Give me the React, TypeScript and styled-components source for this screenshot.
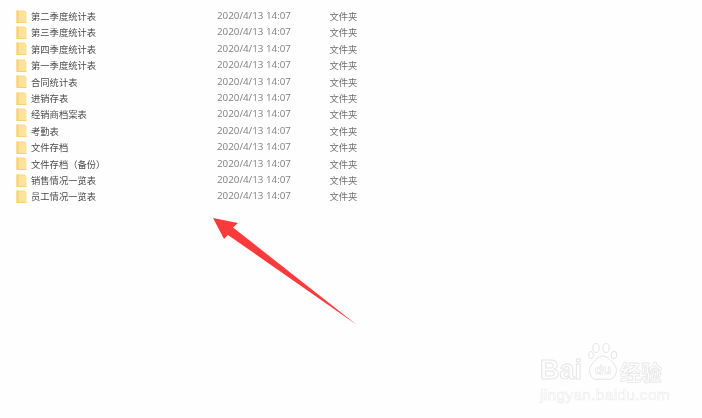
import styled, { createGlobalStyle } from 'styled-components';

const GlobalStyle = createGlobalStyle`
  html, body {
    margin: 0;
    padding: 0;
    background: #fefefe;
  }
`;

const Page = styled.div`
  position: relative;
  width: 702px;
  height: 418px;
  overflow: hidden;
  background: #fefefe;
  font-family: "Noto Sans CJK SC", "Liberation Sans", sans-serif;
`;

const FileList = styled.ul`
  list-style: none;
  margin: 0;
  padding: 8px 0 0 16px;
  filter: blur(0.45px);
`;

const Row = styled.li`
  display: grid;
  grid-template-columns: 15px 186px 113px auto;
  align-items: center;
  height: 16.4px;
  font-size: 9.3px;
  line-height: 16.4px;
  white-space: nowrap;
`;

const FolderIcon = styled.svg`
  display: block;
  width: 11px;
  height: 13px;
`;

const Name = styled.span`
  color: #4a4a4a;
`;

const Modified = styled.span`
  color: #808080;
  font-family: "Open Sans", "Noto Sans", sans-serif;
  font-size: 9.8px;
`;

const Kind = styled.span`
  color: #6e6e6e;
  margin-left: -0.5px;
`;

const Arrow = styled.svg`
  position: absolute;
  left: 0;
  top: 0;
  width: 702px;
  height: 418px;
`;

const Watermark = styled.div`
  position: absolute;
  left: 540px;
  top: 343px;
  width: 130px;
  height: 60px;
  filter: blur(0.3px);
`;

const Brand = styled.div`
  display: flex;
  align-items: flex-end;
  height: 42px;
`;

const BrandLatin = styled.span`
  font-family: "Liberation Sans", sans-serif;
  font-size: 27px;
  line-height: 30px;
  font-weight: 700;
  color: #fefefe;
  -webkit-text-stroke: 1px #e6e6e6;
`;

const BrandCjk = styled.span`
  margin-left: 38px;
  margin-bottom: 2px;
  font-size: 21px;
  line-height: 24px;
  font-weight: 700;
  color: #fefefe;
  -webkit-text-stroke: 0.8px #e6e6e6;
`;

const Paw = styled.svg`
  position: absolute;
  left: 48px;
  top: 0;
  width: 31px;
  height: 38px;
`;

const PawLabel = styled.text`
  font-family: "Liberation Sans", sans-serif;
  font-size: 13px;
  font-weight: 700;
  fill: #fefefe;
  stroke: #e4e4e4;
  stroke-width: 0.6px;
`;

const Domain = styled.div`
  margin-top: 1px;
  font-family: "Liberation Sans", sans-serif;
  font-size: 15.5px;
  line-height: 18px;
  letter-spacing: 0.3px;
  color: #fefefe;
  -webkit-text-stroke: 0.6px #ececec;
  white-space: nowrap;
`;

const names = [
  '第二季度统计表',
  '第三季度统计表',
  '第四季度统计表',
  '第一季度统计表',
  '合同统计表',
  '进销存表',
  '经销商档案表',
  '考勤表',
  '文件存档',
  '文件存档（备份）',
  '销售情况一览表',
  '员工情况一览表',
];

function Folder() {
  return (
    <FolderIcon viewBox="0 0 11 13">
      <path d="M0.5 0.5H9V12.5H0.5Z" fill="#f8d97f" />
      <path d="M2.5 1.5H10.5V12.5H2.5Z" fill="#fce39d" />
      <path d="M0.5 12H10.5V12.8H0.5Z" fill="#f0cb6c" />
      <path d="M0.5 0.5H2.5V12.5H0.5Z" fill="#f6d374" />
    </FolderIcon>
  );
}

export default function App() {
  return (
    <Page>
      <GlobalStyle />
      <FileList>
        {names.map((name) => (
          <Row key={name}>
            <Folder />
            <Name>{name}</Name>
            <Modified>2020/4/13 14:07</Modified>
            <Kind>文件夹</Kind>
          </Row>
        ))}
      </FileList>

      <Arrow viewBox="0 0 702 418">
        <path
          d="M213 218L238 223L233 227.5L357 325L228 235L224 239Z"
          fill="#fb3b3b"
        />
      </Arrow>

      <Watermark>
        <Brand>
          <BrandLatin>Bai</BrandLatin>
          <BrandCjk>经验</BrandCjk>
        </Brand>
        <Paw viewBox="0 0 31 38" fill="#fefefe" stroke="#e4e4e4" strokeWidth="1">
          <ellipse cx="3" cy="12" rx="2.4" ry="3.6" />
          <ellipse cx="8" cy="5" rx="3.2" ry="4.4" />
          <ellipse cx="18" cy="5" rx="3.2" ry="4.4" />
          <ellipse cx="26" cy="12" rx="2.8" ry="3.8" />
          <path d="M15 13C20 13 23 18 26 21C31 26 28 37 20 36.5C17 36 12 36 9 36.5C2 37 -1 26 4 21C7 18 10 13 15 13Z" />
          <PawLabel x="7" y="31">du</PawLabel>
        </Paw>
        <Domain>jingyan.baidu.com</Domain>
      </Watermark>
    </Page>
  );
}
